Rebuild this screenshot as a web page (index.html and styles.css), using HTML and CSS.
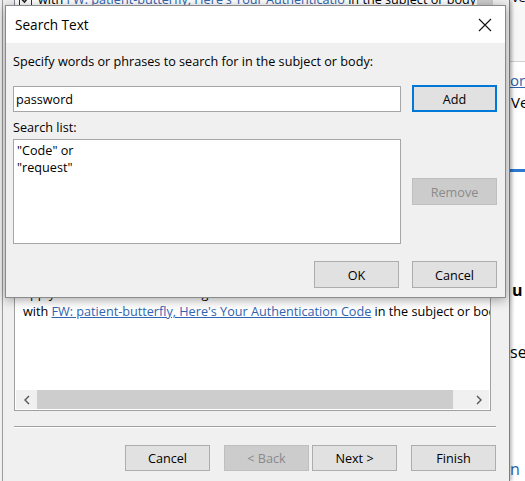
FILE: index.html
```html
<!DOCTYPE html>
<html>
<head>
<meta charset="utf-8">
<link rel="stylesheet" href="styles.css">
</head>
<body>
<div class="screen">
  <div class="wizard">
    <div class="cond-box">
      <div class="cond-list">
        <div class="cond-row">
          <span class="check"><svg width="11" height="11" viewBox="0 0 11 11"><path d="M2 5.5 L4.5 8 L9 2.5" fill="none" stroke="#222" stroke-width="1.6"/></svg></span>
          <span>with <a class="link">FW: patient-butterfly, Here's Your Authenticatio</a> in the subject or body</span>
        </div>
      </div>
      <div class="vscroll"><div class="vthumb"></div></div>
    </div>
    <div class="desc-box">
      <div class="desc-text">
        <div class="line">apply this rule after the message arrives</div>
        <div class="line">with <a class="link">FW: patient-butterfly, Here's Your Authentication Code</a> in the subject or body</div>
      </div>
      <div class="hscroll">
        <span class="arrow"><svg width="8" height="10" viewBox="0 0 8 10"><path d="M6 1 L2 5 L6 9" fill="none" stroke="#555" stroke-width="1.4"/></svg></span>
        <div class="hthumb"></div>
        <span class="arrow right"><svg width="8" height="10" viewBox="0 0 8 10"><path d="M2 1 L6 5 L2 9" fill="none" stroke="#555" stroke-width="1.4"/></svg></span>
      </div>
    </div>
    <div class="separator"></div>
    <div class="wiz-buttons">
      <button class="btn">Cancel</button>
      <button class="btn disabled back">&lt; Back</button>
      <button class="btn next">Next &gt;</button>
      <button class="btn finish">Finish</button>
    </div>
  </div>
  <div class="side">
    <div class="side-top"><span class="cut">ve</span></div>
    <div class="side-link">or</div>
    <div class="side-text">Ve</div>
    <div class="side-bar"></div>
    <div class="side-bold">u</div>
    <div class="side-text2">se</div>
    <div class="side-link2">n</div>
  </div>

  <div class="dialog">
    <div class="titlebar">
      <span class="title">Search Text</span>
      <svg class="close" width="14" height="14" viewBox="0 0 14 14"><path d="M1 1 L13 13 M13 1 L1 13" stroke="#111" stroke-width="1.1"/></svg>
    </div>
    <div class="dlg-body">
      <div class="prompt">Specify words or phrases to search for in the subject or body:</div>
      <div class="add-row">
        <div class="input">password</div>
        <button class="btn default">Add</button>
      </div>
      <div class="list-label">Search list:</div>
      <div class="list-row">
        <div class="listbox">
          <div>"Code" or</div>
          <div>"request"</div>
        </div>
        <button class="btn disabled remove">Remove</button>
      </div>
      <div class="dlg-buttons">
        <button class="btn">OK</button>
        <button class="btn">Cancel</button>
      </div>
    </div>
  </div>
</div>
</body>
</html>
```
FILE: styles.css
```css
html, body {
  margin: 0;
  padding: 0;
}
body {
  width: 525px;
  height: 481px;
  overflow: hidden;
  background: #f0f0f0;
  font-family: "Open Sans", "Noto Sans", "Liberation Sans", sans-serif;
  font-size: 12.65px;
  color: #000;
}
.screen {
  position: relative;
  display: flex;
  width: 525px;
  height: 481px;
}
.wizard {
  width: 506px;
  margin-left: 2px;
  border-left: 1px solid #9c9c9c;
  border-right: 1px solid #7d7d7d;
  background: #f0f0f0;
  display: flex;
  flex-direction: column;
  box-shadow: 2px 0 3px rgba(0,0,0,0.25);
  z-index: 1;
}
.cond-box {
  margin: -10px 0 0 11px;
  width: 476px;
  height: 270px;
  background: #fff;
  border: 1px solid #828790;
  display: flex;
}
.cond-list {
  flex: 1;
  padding-top: 0;
}
.cond-row {
  display: flex;
  align-items: center;
  gap: 6px;
  height: 16px;
  padding-left: 4px;
  white-space: nowrap;
  overflow: hidden;
}
.check {
  width: 11px;
  height: 11px;
  border: 1px solid #333;
  display: inline-flex;
}
.vscroll {
  width: 20px;
  background: #f0f0f0;
  border-left: 1px solid #fff;
}
.vthumb {
  width: 16px;
  margin: 0 auto;
  height: 60px;
  background: #cdcdcd;
}
.link {
  color: #2f64b0;
  text-decoration: underline;
}
.desc-box {
  margin: 21px 0 0 11px;
  width: 475px;
  height: 126px;
  background: #fff;
  border: 1px solid #a0a0a0;
  display: flex;
  flex-direction: column;
}
.desc-text {
  flex: 1;
  padding: 0 0 0 8px;
  white-space: nowrap;
  overflow: hidden;
}
.line {
  height: 18px;
  line-height: 18px;
}
.hscroll {
  height: 19px;
  margin: 0 1px 1px 1px;
  background: #f0f0f0;
  display: flex;
  align-items: center;
}
.arrow {
  width: 21px;
  display: flex;
  justify-content: center;
}
.arrow.right {
  margin-left: auto;
}
.hthumb {
  width: 416px;
  height: 19px;
  background: #cdcdcd;
}
.separator {
  margin: 15px 0 0 11px;
  width: 482px;
  border-top: 1px solid #a0a0a0;
  border-bottom: 1px solid #fff;
}
.wiz-buttons {
  display: flex;
  margin: 17px 0 0 122px;
}
.btn {
  font: inherit;
  width: 85px;
  height: 26px;
  padding: 0;
  background: #e1e1e1;
  border: 1px solid #adadad;
  color: #000;
}
.btn.disabled {
  background: #cccccc;
  border-color: #bfbfbf;
  color: #8a8a8a;
}
.wiz-buttons .back { margin-left: 14px; }
.wiz-buttons .next { margin-left: 3px; }
.wiz-buttons .finish { margin-left: 14px; }

.side {
  flex: 1;
  background: #fff;
  display: flex;
  flex-direction: column;
  white-space: nowrap;
  overflow: hidden;
  font-size: 13px;
}
.side-top {
  height: 61px;
  border-bottom: 1px solid #d0d0d0;
  background: #f7f7f7;
}
.cut {
  display: block;
  margin-top: -12px;
  padding-left: 2px;
}
.side-link {
  margin-top: 9px;
  color: #2f64b0;
  text-decoration: underline;
  font-size: 15px;
  line-height: 18px;
}
.side-text {
  margin-top: 4px;
  font-size: 15px;
  line-height: 18px;
  padding-left: 1px;
}
.side-bar {
  margin-top: 58px;
  height: 3px;
  background: #2b79d0;
}
.side-bold {
  margin-top: 109px;
  font-weight: bold;
  font-size: 16px;
  line-height: 18px;
  padding-left: 2px;
}
.side-text2 {
  margin-top: 44px;
  font-size: 16px;
  line-height: 18px;
}
.side-link2 {
  margin-top: 99px;
  font-size: 16px;
  line-height: 18px;
  color: #2f64b0;
}

.dialog {
  position: absolute;
  left: 5px;
  top: 5px;
  width: 499px;
  height: 291px;
  border: 1px solid #8a8a8a;
  background: #f0f0f0;
  box-shadow: 0 2px 10px rgba(0,0,0,0.35);
  z-index: 5;
  display: flex;
  flex-direction: column;
}
.titlebar {
  height: 37px;
  background: #fff;
  display: flex;
  align-items: center;
  padding: 0 13px 0 9px;
}
.title {
  font-size: 13.6px;
  flex: 1;
}
.dlg-body {
  padding: 0 8px 0 7px;
  display: flex;
  flex-direction: column;
}
.prompt {
  margin-top: 10px;
  line-height: 16px;
}
.add-row {
  margin-top: 16px;
  display: flex;
  align-items: center;
  gap: 11px;
}
.input {
  width: 384px;
  height: 24px;
  line-height: 24px;
  background: #fff;
  border: 1px solid #a6a6a6;
  padding-left: 2px;
}
.btn.default {
  height: 27px;
  border: 2px solid #0078d7;
}
.list-label {
  margin-top: 7px;
  line-height: 16px;
}
.list-row {
  margin-top: 4px;
  display: flex;
  align-items: flex-start;
  gap: 11px;
}
.listbox {
  width: 383px;
  height: 101px;
  background: #fff;
  border: 1px solid #a6a6a6;
  padding: 2px 0 0 3px;
  line-height: 17px;
}
.remove {
  margin-top: 39px;
  height: 27px;
}
.dlg-buttons {
  margin-top: 17px;
  display: flex;
  justify-content: flex-end;
  gap: 13px;
}
.dlg-buttons .btn {
  height: 27px;
}
```
